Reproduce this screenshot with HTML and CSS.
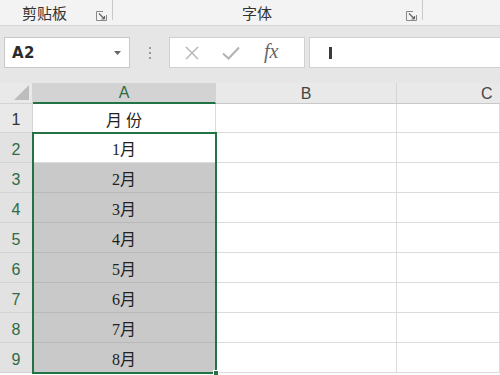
FILE: index.html
```html
<!DOCTYPE html>
<html lang="zh">
<head>
<meta charset="utf-8">
<link rel="stylesheet" href="styles.css">
</head>
<body>
<div class="app">
  <div class="ribbon">
    <div class="group g1">
      <span class="glabel">剪贴板</span>
      <svg class="launch" width="11" height="10" viewBox="0 0 11 10"><path d="M0.5 0.5H7M0.5 0.5V9.5H10.5V4" fill="none" stroke="#888" stroke-width="1"/><path d="M3 2.5L8.5 8M8.5 8H5.5M8.5 8V5" fill="none" stroke="#666" stroke-width="1.2"/></svg>
    </div>
    <div class="group g2">
      <span class="glabel">字体</span>
      <svg class="launch" width="11" height="10" viewBox="0 0 11 10"><path d="M0.5 0.5H7M0.5 0.5V9.5H10.5V4" fill="none" stroke="#888" stroke-width="1"/><path d="M3 2.5L8.5 8M8.5 8H5.5M8.5 8V5" fill="none" stroke="#666" stroke-width="1.2"/></svg>
    </div>
  </div>
  <div class="fbar">
    <div class="namebox">
      <span class="ref">A2</span>
      <svg width="7" height="4" viewBox="0 0 7 4"><path d="M0 0H7L3.5 4Z" fill="#666"/></svg>
    </div>
    <div class="dots"><i></i><i></i><i></i></div>
    <div class="fxbox">
      <svg class="ic-x" width="14" height="14" viewBox="0 0 14 14"><path d="M1 1L13 13M13 1L1 13" stroke="#b3b3b3" stroke-width="1.4" fill="none"/></svg>
      <svg class="ic-ok" width="18" height="14" viewBox="0 0 18 14"><path d="M1 7.5L6.5 12.5L17 1.5" stroke="#b3b3b3" stroke-width="2" fill="none"/></svg>
      <span class="fx">fx</span>
    </div>
    <div class="input"><span class="caret"></span></div>
  </div>
  <div class="sheet">
    <div class="corner"><span class="tri"></span></div>
    <div class="ch sel">A</div>
    <div class="ch">B</div>
    <div class="ch last">C</div>

    <div class="rh">1</div><div class="c ca">月 份</div><div class="c"></div><div class="c"></div>
    <div class="rh on">2</div><div class="c ca">1月</div><div class="c"></div><div class="c"></div>
    <div class="rh on">3</div><div class="c ca g">2月</div><div class="c"></div><div class="c"></div>
    <div class="rh on">4</div><div class="c ca g">3月</div><div class="c"></div><div class="c"></div>
    <div class="rh on">5</div><div class="c ca g">4月</div><div class="c"></div><div class="c"></div>
    <div class="rh on">6</div><div class="c ca g">5月</div><div class="c"></div><div class="c"></div>
    <div class="rh on">7</div><div class="c ca g">6月</div><div class="c"></div><div class="c"></div>
    <div class="rh on">8</div><div class="c ca g">7月</div><div class="c"></div><div class="c"></div>
    <div class="rh on">9</div><div class="c ca g">8月</div><div class="c"></div><div class="c"></div>

    <div class="selbox"><span class="handle"></span></div>
  </div>
</div>
</body>
</html>
```
FILE: styles.css
```css
* { box-sizing: border-box; }
html, body { margin: 0; padding: 0; }
body {
  width: 500px;
  height: 375px;
  overflow: hidden;
  background: #e6e6e6;
  font-family: "Noto Sans CJK SC", "Liberation Sans", sans-serif;
}
.app { width: 500px; height: 375px; display: flex; flex-direction: column; overflow: hidden; }

.ribbon {
  height: 26px;
  flex: none;
  background: #f3f3f3;
  border-bottom: 1px solid #d6d6d6;
  display: flex;
}
.group {
  position: relative;
  height: 20px;
  border-right: 1px solid #c9c9c9;
  display: flex;
  align-items: center;
}
.g1 { width: 113px; padding-left: 22px; }
.g2 { width: 310px; padding-left: 129px; }
.glabel { font-size: 15px; color: #333; line-height: 20px; margin-top: 6px; }
.launch { position: absolute; top: 11px; right: 5px; }

.fbar {
  flex: none;
  height: 57px;
  padding: 11px 0 15px 4px;
  display: flex;
  align-items: stretch;
}
.namebox {
  width: 126px;
  background: #fff;
  border: 1px solid #c8c8c8;
  display: flex;
  align-items: center;
  justify-content: space-between;
  padding: 0 8px 0 7px;
}
.ref {
  font-family: "DejaVu Sans", sans-serif;
  font-weight: bold;
  font-size: 15px;
  color: #2b2b2b;
  letter-spacing: 0.5px;
}
.dots {
  width: 39px;
  display: flex;
  flex-direction: column;
  align-items: center;
  justify-content: center;
  gap: 3px;
}
.dots i { width: 2px; height: 2px; background: #9a9a9a; display: block; }
.fxbox {
  width: 136px;
  background: #fff;
  border: 1px solid #d0d0d0;
  display: flex;
  align-items: center;
  padding-left: 15px;
}
.ic-ok { margin-left: 23px; }
.fx {
  margin-left: 24px;
  font-family: "Liberation Serif", serif;
  font-style: italic;
  font-size: 20px;
  color: #666;
  margin-top: -3px;
}
.input {
  flex: 1;
  margin-left: 4px;
  background: #fff;
  border: 1px solid #d0d0d0;
  border-right: none;
  display: flex;
  align-items: center;
  padding-left: 19px;
}
.caret { width: 3px; height: 12px; background: #3a3a3a; display: block; }

.sheet {
  position: relative;
  flex: 1;
  display: grid;
  grid-template-columns: 33px 183px 181px 1fr;
  grid-template-rows: 21px 29px repeat(8, 30px);
  background: #fff;
  overflow: hidden;
}
.corner {
  position: relative;
  background: #e9e9e9;
  border-right: 1px solid #d4d4d4;
  border-bottom: 1px solid #d4d4d4;
}
.tri {
  position: absolute;
  right: 3px;
  bottom: 3px;
  width: 0; height: 0;
  border-left: 15px solid transparent;
  border-bottom: 15px solid #bdbdbd;
}
.ch {
  background: #e9e9e9;
  border-right: 1px solid #d4d4d4;
  border-bottom: 1px solid #c8c8c8;
  font-family: "Liberation Sans", sans-serif;
  font-size: 16px;
  color: #444;
  display: flex;
  align-items: center;
  justify-content: center;
  padding-top: 1px;
}
.ch.last { justify-content: flex-start; padding-left: 84px; border-right: none; }
.ch.sel {
  background: #d3d3d3;
  color: #2d6b47;
  border-bottom: 2px solid #217346;
}
.rh {
  background: #e9e9e9;
  border-right: 1px solid #d4d4d4;
  border-bottom: 1px solid #d4d4d4;
  font-family: "Liberation Sans", sans-serif;
  font-size: 16px;
  color: #333;
  display: flex;
  align-items: center;
  justify-content: center;
  padding-top: 4px;
}
.rh.on { background: #e2e2e2; color: #2d6b47; }
.c {
  border-right: 1px solid #dcdcdc;
  border-bottom: 1px solid #dcdcdc;
}
.ca {
  display: flex;
  align-items: center;
  justify-content: center;
  font-family: "Liberation Serif", "Noto Sans CJK SC", serif;
  font-size: 16px;
  color: #222;
  padding-top: 1px;
}
.c.g { background: #c9c9c9; border-bottom-color: #b9b9b9; border-right-color: #c9c9c9; }

.selbox {
  position: absolute;
  left: 32px;
  top: 49px;
  width: 185px;
  height: 242px;
  border: 2px solid #217346;
  pointer-events: none;
}
.handle {
  position: absolute;
  right: -4px;
  bottom: -4px;
  width: 6px;
  height: 6px;
  background: #217346;
  border: 1px solid #fff;
}
```
